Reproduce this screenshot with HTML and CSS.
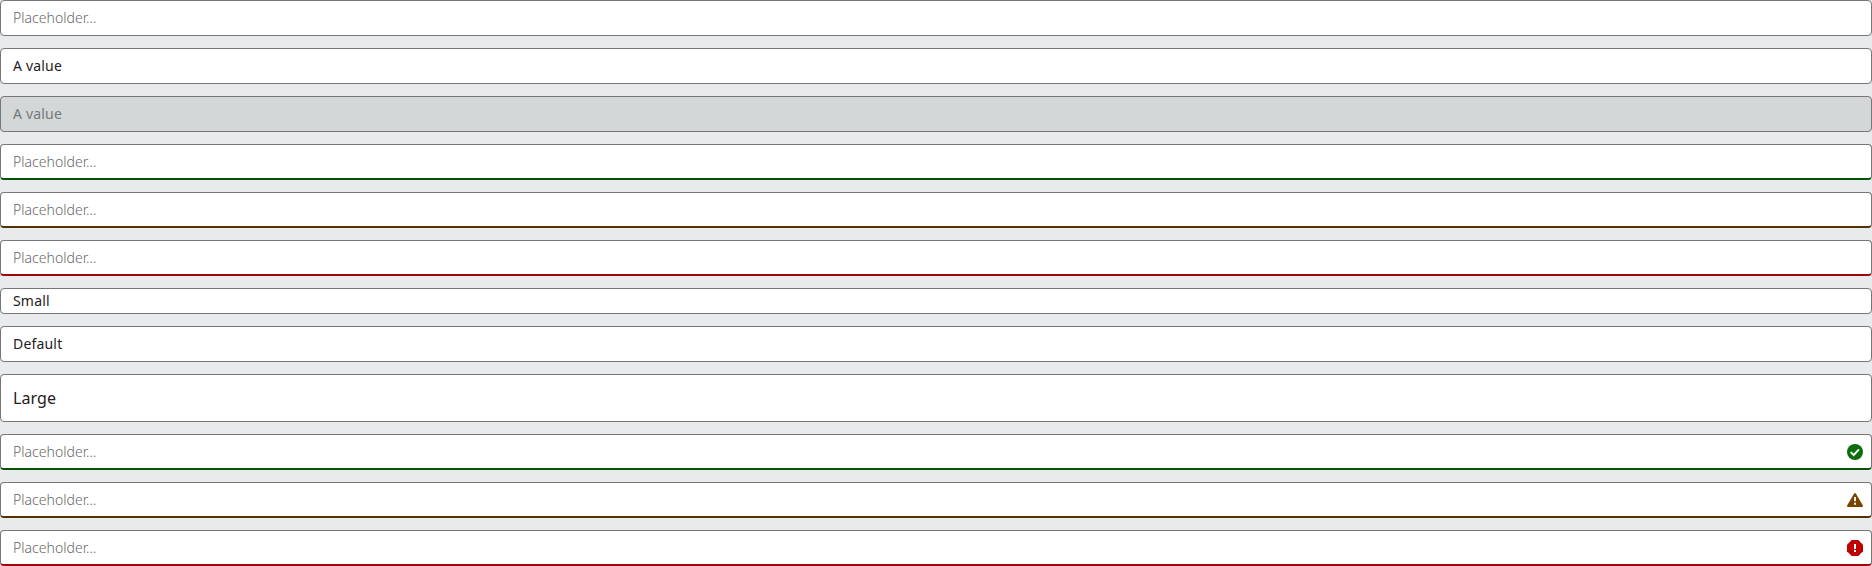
FILE: index.html
```html
<!DOCTYPE html>
<html lang="en">
<head>
<meta charset="utf-8">
<title>Inputs</title>
<link rel="stylesheet" href="styles.css">
</head>
<body>
<div class="stack">
<div class="input placeholder">Placeholder...</div>
<div class="input">A value</div>
<div class="input disabled">A value</div>
<div class="input placeholder success">Placeholder...</div>
<div class="input placeholder warning">Placeholder...</div>
<div class="input placeholder error">Placeholder...</div>
<div class="input small">Small</div>
<div class="input">Default</div>
<div class="input large">Large</div>
<div class="input placeholder success"><span>Placeholder...</span><svg class="icon" viewBox="0 0 16 16"><circle cx="8" cy="8" r="8" fill="currentColor"/><path d="M3.7 8.1l3 2.9 5.3-5.6" fill="none" stroke="#fff" stroke-width="2"/></svg></div>
<div class="input placeholder warning"><span>Placeholder...</span><svg class="icon" viewBox="0 0 16 16"><path d="M8 2L15 14H1z" fill="currentColor" stroke="currentColor" stroke-width="2" stroke-linejoin="round"/><path d="M8 5v4.3M8 10.7v2" stroke="#fff" stroke-width="1.8"/></svg></div>
<div class="input placeholder error"><span>Placeholder...</span><svg class="icon" viewBox="0 0 16 16"><path d="M4.7 0h6.6L16 4.7v6.6L11.3 16H4.7L0 11.3V4.7z" fill="currentColor"/><path d="M8 4v5M8 10v2" stroke="#fff" stroke-width="2"/></svg></div>
</div>
</body>
</html>
```

FILE: styles.css
```css
* { box-sizing: border-box; }
body { margin: 0; background: #e9eaeb; font-family: "Noto Sans", sans-serif; }
.stack { display: flex; flex-direction: column; gap: 12px; }
.input { display: flex; align-items: center; justify-content: space-between; height: 36px; padding: 0 8px 0 12px; border: 1px solid #757778; border-radius: 4px; background: #fff; color: #1f2022; font-size: 14px; line-height: 20px; letter-spacing: 0.18px; }
.placeholder { color: #66686a; font-weight: 300; letter-spacing: 0.03px; }
.disabled { background: #d3d7d8; color: #757778; }
.success, .warning, .error { padding-top: 1px; }
.success { border-bottom: 2px solid #065406; }
.warning { border-bottom: 2px solid #543100; }
.error { border-bottom: 2px solid #a00808; }
.small { height: 26px; }
.large { height: 48px; font-size: 16px; letter-spacing: 0.1px; }
.icon { width: 16px; height: 16px; }
.success .icon { color: #0a6e0a; }
.warning .icon { color: #774400; }
.error .icon { color: #c00000; }
```
